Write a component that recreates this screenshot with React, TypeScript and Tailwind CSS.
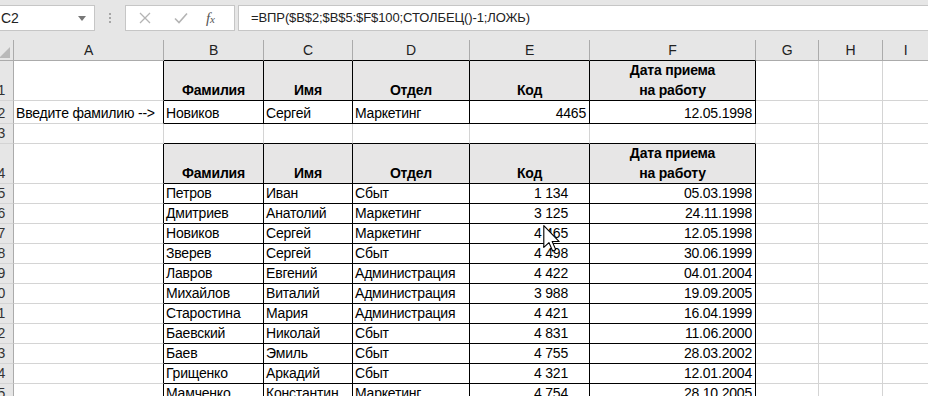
import { FC, ReactNode } from "react";

const COLS = [150, 100, 89, 117, 120, 166, 63, 64, 46];
const LETTERS = ["A", "B", "C", "D", "E", "F", "G", "H", "I"];

type Row = {
  n: string;
  h: number;
  kind: "head" | "data" | "gap";
  a?: string;
  vals?: string[];
  codePad?: boolean;
};

const HEAD = ["Фамилия", "Имя", "Отдел", "Код", "Дата приема\nна работу"];

const rows: Row[] = [
  { n: "1", h: 40, kind: "head" },
  { n: "2", h: 23, kind: "data", a: "Введите фамилию -->", vals: ["Новиков", "Сергей", "Маркетинг", "4465", "12.05.1998"] },
  { n: "3", h: 20, kind: "gap" },
  { n: "4", h: 40, kind: "head" },
  { n: "5", h: 20, kind: "data", codePad: true, vals: ["Петров", "Иван", "Сбыт", "1 134", "05.03.1998"] },
  { n: "6", h: 20, kind: "data", codePad: true, vals: ["Дмитриев", "Анатолий", "Маркетинг", "3 125", "24.11.1998"] },
  { n: "7", h: 20, kind: "data", codePad: true, vals: ["Новиков", "Сергей", "Маркетинг", "4 465", "12.05.1998"] },
  { n: "8", h: 20, kind: "data", codePad: true, vals: ["Зверев", "Сергей", "Сбыт", "4 498", "30.06.1999"] },
  { n: "9", h: 20, kind: "data", codePad: true, vals: ["Лавров", "Евгений", "Администрация", "4 422", "04.01.2004"] },
  { n: "10", h: 20, kind: "data", codePad: true, vals: ["Михайлов", "Виталий", "Администрация", "3 988", "19.09.2005"] },
  { n: "11", h: 20, kind: "data", codePad: true, vals: ["Старостина", "Мария", "Администрация", "4 421", "16.04.1999"] },
  { n: "12", h: 20, kind: "data", codePad: true, vals: ["Баевский", "Николай", "Сбыт", "4 831", "11.06.2000"] },
  { n: "13", h: 20, kind: "data", codePad: true, vals: ["Баев", "Эмиль", "Сбыт", "4 755", "28.03.2002"] },
  { n: "14", h: 20, kind: "data", codePad: true, vals: ["Грищенко", "Аркадий", "Сбыт", "4 321", "12.01.2004"] },
  { n: "15", h: 20, kind: "data", codePad: true, vals: ["Мамченко", "Константин", "Маркетинг", "4 754", "28.10.2005"] },
];

type CellProps = {
  w: number;
  darkR?: boolean;
  darkB?: boolean;
  fill?: boolean;
  className?: string;
  children?: ReactNode;
};

const Cell: FC<CellProps> = ({ w, darkR, darkB, fill, className, children }) => (
  <div
    style={{ width: w }}
    className={`shrink-0 h-full flex overflow-hidden whitespace-nowrap border-r border-b ${
      darkR ? "border-r-black" : "border-r-[#d4d4d4]"
    } ${darkB ? "border-b-black" : "border-b-[#d4d4d4]"} ${
      fill ? "bg-[#e7e6e6]" : "bg-white"
    } ${className ?? ""}`}
  >
    {children}
  </div>
);

const RowHeader: FC<{ n: string }> = ({ n }) => (
  <div className="w-[14px] shrink-0 h-full flex items-end justify-end pr-[8px] pb-[1px] overflow-hidden bg-[#e6e6e6] border-r border-b border-r-[#ababab] border-b-[#d4d4d4] text-[14px] leading-[18px] text-[#333]">
    {n}
  </div>
);

const SheetRow: FC<{ row: Row }> = ({ row }) => {
  const tableRow = row.kind !== "gap";
  return (
    <div style={{ height: row.h }} className="flex">
      <RowHeader n={row.n} />
      <Cell w={COLS[0]} darkR={tableRow} className="items-end pl-[2px] leading-[19px]">
        {row.a}
      </Cell>
      {[0, 1, 2, 3, 4].map((i) => {
        if (row.kind === "gap") return <Cell key={i} w={COLS[i + 1]} darkB />;
        if (row.kind === "head")
          return (
            <Cell key={i} w={COLS[i + 1]} darkR darkB fill className="items-end justify-center text-center font-bold leading-[20px] whitespace-pre-line">
              {HEAD[i]}
            </Cell>
          );
        const v = row.vals![i];
        const right = i >= 3;
        return (
          <Cell
            key={i}
            w={COLS[i + 1]}
            darkR
            darkB
            className={`items-end leading-[19px] ${
              right ? (i === 3 && row.codePad ? "justify-end pr-[21px]" : "justify-end pr-[3px]") : "pl-[2px]"
            }`}
          >
            {v}
          </Cell>
        );
      })}
      {[6, 7, 8].map((c) => (
        <Cell key={c} w={COLS[c]} />
      ))}
    </div>
  );
};

const FormulaBar: FC = () => (
  <div className="h-[40px] flex items-start pt-[5px] bg-[#e6e6e6]">
    <div className="w-[95px] h-[26px] bg-white border border-l-0 border-[#c6c6c6] flex items-center justify-between pl-[1px] pr-[8px] text-[14px] text-[#222]">
      <span>C2</span>
      <svg width="8" height="5" viewBox="0 0 8 5">
        <path d="M0 0 L8 0 L4 5 Z" fill="#777" />
      </svg>
    </div>
    <div className="w-[30px] h-[26px] flex flex-col items-center justify-center gap-[2px]">
      <span className="w-[2px] h-[2px] bg-[#a6a6a6]" />
      <span className="w-[2px] h-[2px] bg-[#a6a6a6]" />
      <span className="w-[2px] h-[2px] bg-[#a6a6a6]" />
    </div>
    <div className="w-[110px] h-[26px] bg-white border border-[#c6c6c6] flex items-center">
      <svg width="12" height="12" viewBox="0 0 12 12" className="ml-[13px]">
        <path d="M1 1 L11 11 M11 1 L1 11" stroke="#b4b4b4" strokeWidth="1.3" />
      </svg>
      <svg width="14" height="12" viewBox="0 0 14 12" className="ml-[23px]">
        <path d="M1 6.5 L5 10.5 L13 1.5" stroke="#b4b4b4" strokeWidth="1.6" fill="none" />
      </svg>
      <span className="ml-[18px] font-['Liberation_Serif',serif] italic text-[15px] text-[#555] leading-none">
        f<span className="text-[11px]">x</span>
      </span>
    </div>
    <div className="ml-[3px] flex-1 h-[26px] bg-white border border-r-0 border-[#c6c6c6] flex items-center pl-[12px] text-[13px] tracking-[-0.1px] text-[#222]">
      =ВПР($B$2;$B$5:$F$100;СТОЛБЕЦ()-1;ЛОЖЬ)
    </div>
  </div>
);

const ColumnHeader: FC = () => (
  <div className="h-[21px] flex bg-[#e6e6e6]">
    <div className="w-[14px] shrink-0 h-full border-r border-b border-r-[#ababab] border-b-[#ababab] relative">
      <svg width="11" height="11" viewBox="0 0 11 11" className="absolute right-[3px] bottom-[2px]">
        <path d="M11 0 L11 11 L0 11 Z" fill="#b9b9b9" />
      </svg>
    </div>
    {LETTERS.map((l, i) => (
      <div
        key={l}
        style={{ width: COLS[i] }}
        className={`shrink-0 h-full flex items-center justify-center border-r border-b border-r-[#ababab] ${
          i >= 1 && i <= 5 ? "border-b-black" : "border-b-[#ababab]"
        } text-[14px] text-[#222]`}
      >
        {l}
      </div>
    ))}
  </div>
);

const Cursor: FC = () => (
  <svg width="17" height="28" viewBox="0 0 12 20" className="absolute left-[543px] top-[225px]">
    <path d="M0.5 0.5 L0.5 16 L4.2 12.6 L6.8 18.6 L9 17.6 L6.5 11.8 L11.5 11.8 Z" fill="white" stroke="black" strokeWidth="0.8" strokeLinejoin="round" />
  </svg>
);

export default function App() {
  return (
    <div className="w-[928px] h-[396px] overflow-hidden relative bg-white font-['Liberation_Sans',sans-serif] text-[14px] tracking-[-0.2px] text-black">
      <FormulaBar />
      <ColumnHeader />
      {rows.map((r) => (
        <SheetRow key={r.n} row={r} />
      ))}
      <Cursor />
    </div>
  );
}
